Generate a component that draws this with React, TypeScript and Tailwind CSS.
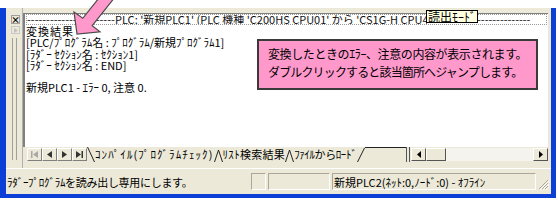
import React from "react";

const F = "font-['Noto_Sans_CJK_JP',sans-serif]";

function Slant({ d, w = 8 }: { d: string; w?: number }) {
  return (
    <svg width={w} height={15} viewBox={`0 0 ${w} 15`} className="shrink-0">
      <path d={d} stroke="#222" strokeWidth="1" fill="none" />
    </svg>
  );
}

function NavBtn({ children, dim }: { children: React.ReactNode; dim?: boolean }) {
  return (
    <div className={`w-[15px] h-[13px] flex items-center justify-center bg-[#ece9d8] border border-t-white border-l-white border-r-[#808080] border-b-[#808080] ${dim ? "text-[#a8a8a8]" : "text-[#333]"}`}>
      {children}
    </div>
  );
}

export default function App() {
  return (
    <div className={`w-[558px] h-[200px] bg-white pt-[8px] relative overflow-hidden ${F} text-black`}>
      <div className="w-[556px] h-[190px] flex flex-col bg-[#ece9d8] border-l-[6px] border-r-[5px] border-b-[4px] border-l-[#0b3fd6] border-r-[#0b3fd6] border-b-[#0b3fd6]">
        {/* main area */}
        <div className="flex h-[160px]">
          {/* left dock strip */}
          <div className="w-[16px] flex flex-col items-start pl-[5px] pt-[7px]">
            <div className="w-[9px] h-[9px] bg-[#ece9d8] border border-[#a0a0a0] flex items-center justify-center text-[9px] leading-none font-bold">
              ×
            </div>
            <div className="w-[9px] h-[8px] mt-[2px] bg-[#ece9d8] border border-[#c8c8c8] flex items-center justify-center">
              <svg width="4" height="5" viewBox="0 0 4 5"><path d="M0 0 L4 2.5 L0 5Z" fill="#c0c0c0" /></svg>
            </div>
            <div className="flex gap-[3px] mt-[4px] h-[122px] ml-[1px]">
              <div className="w-[1px] h-full bg-[#a0a0a0]" />
              <div className="w-[1px] h-full bg-[#a0a0a0]" />
            </div>
          </div>
          {/* pane */}
          <div className="flex-1 flex flex-col pt-[5px] pr-[3px] border-l border-l-[#b0b0b0]">
            <div className="relative h-[134px] bg-white border-l-2 border-t border-l-[#808080] border-t-[#808080] pl-[1px]">
              {/* header line */}
              <div className="h-[11px] mr-[1px] border border-dotted border-[#9a9a9a] flex items-center text-[11px] leading-[11px] whitespace-nowrap overflow-hidden text-[#111]">
                <span className="w-[88px] overflow-hidden shrink-0">------------------------</span>
                <span className="w-[312px] overflow-hidden shrink-0">PLC: '新規PLC1' (PLC 機種 'C200HS CPU01' から 'CS1G-H CPU42' へ変更)</span>
                <span className="w-[50px] shrink-0" />
                <span className="w-[53px] overflow-hidden shrink-0">------------------</span>
              </div>
              {/* tooltip */}
              <div className="absolute left-[401px] top-[-4px] h-[13px] px-[1px] bg-[#ffffe1] border border-black text-[12px] leading-[11px] whitespace-nowrap">
                読出ﾓｰﾄﾞ
              </div>
              {/* text lines */}
              <div className="pt-[1px] text-[11px] leading-[11.3px] whitespace-pre">
                <div className="tracking-[1px]">変換結果</div>
                <div>[PLC/ﾌﾟﾛｸﾞﾗﾑ名 : ﾌﾟﾛｸﾞﾗﾑ/新規ﾌﾟﾛｸﾞﾗﾑ1]</div>
                <div>[ﾗﾀﾞｰ ｾｸｼｮﾝ名 : ｾｸｼｮﾝ1]</div>
                <div>[ﾗﾀﾞｰ ｾｸｼｮﾝ名 : END]</div>
                <div> </div>
                <div>新規PLC1 - ｴﾗｰ 0, 注意 0.</div>
              </div>
              {/* callout */}
              <div className="absolute left-[232px] top-[25px] w-[281px] h-[51px] bg-[#ff99cc] border-2 border-[#3a3a3a] pl-[9px] pt-[4px] text-[12px] leading-[18px] whitespace-nowrap">
                <div className="tracking-[-0.4px]">変換したときのｴﾗｰ、注意の内容が表示されます。</div>
                <div className="tracking-[-0.85px]">ダブルクリックすると該当箇所へジャンプします。</div>
              </div>
            </div>
            {/* tab bar */}
            <div className="h-[15px] flex items-center text-[11px] leading-[13px] whitespace-nowrap">
              <div className="flex pl-[4px] shrink-0">
                <NavBtn dim>
                  <svg width="7" height="7" viewBox="0 0 7 7"><path d="M0 0h1.5v7H0z M7 0 L2 3.5 L7 7Z" fill="currentColor" /></svg>
                </NavBtn>
                <NavBtn>
                  <svg width="5" height="7" viewBox="0 0 5 7"><path d="M5 0 L0 3.5 L5 7Z" fill="currentColor" /></svg>
                </NavBtn>
                <NavBtn>
                  <svg width="5" height="7" viewBox="0 0 5 7"><path d="M0 0 L5 3.5 L0 7Z" fill="currentColor" /></svg>
                </NavBtn>
                <NavBtn>
                  <svg width="7" height="7" viewBox="0 0 7 7"><path d="M0 0 L5 3.5 L0 7Z M5.5 0h1.5v7H5.5z" fill="currentColor" /></svg>
                </NavBtn>
              </div>
              <Slant d="M0.5 0 L7.5 15" />
              <span className="tracking-[1.1px]">ｺﾝﾊﾟｲﾙ(ﾌﾟﾛｸﾞﾗﾑﾁｪｯｸ)</span>
              <Slant w={9} d="M0.5 15 L4.5 3 M4.5 3 L8.5 15" />
              <span className="tracking-[0.3px]">ﾘｽﾄ検索結果</span>
              <Slant w={9} d="M0.5 15 L4.5 3 M4.5 3 L8.5 15" />
              <span className="tracking-[-0.4px]">ﾌｧｲﾙからﾛｰﾄﾞ</span>
              <Slant d="M0.5 15 L7.5 1" />
              <div className="flex-1 h-[15px] border-t border-t-[#222]" />
              <div className="h-[15px] w-[5px] flex gap-[2px] shrink-0">
                <div className="w-[1px] h-full bg-[#555]" />
                <div className="w-[1px] h-full bg-[#555]" />
              </div>
              <div className="w-[137px] shrink-0 h-[13px] flex bg-[#f4f3ee]">
                <div className="w-[15px] h-[13px] flex items-center justify-center bg-[#ece9d8] border border-t-white border-l-white border-r-[#555] border-b-[#555]">
                  <svg width="4" height="7" viewBox="0 0 4 7"><path d="M4 0 L0 3.5 L4 7Z" fill="#000" /></svg>
                </div>
                <div className="w-[20px] h-[13px] bg-[#ece9d8] border border-t-white border-l-white border-r-[#555] border-b-[#555]" />
                <div className="flex-1" />
                <div className="w-[15px] h-[13px] flex items-center justify-center bg-[#ece9d8] border border-t-white border-l-white border-r-[#555] border-b-[#555]">
                  <svg width="4" height="7" viewBox="0 0 4 7"><path d="M0 0 L4 3.5 L0 7Z" fill="#000" /></svg>
                </div>
              </div>
            </div>
          </div>
        </div>
        {/* status bar */}
        <div className="flex-1 flex items-center border-t border-t-white pl-[1px] pr-[2px] text-[11px] leading-[14px] whitespace-nowrap">
          <div className="w-[244px] shrink-0 tracking-[-0.3px]">ﾗﾀﾞｰﾌﾟﾛｸﾞﾗﾑを読み出し専用にします。</div>
          <div className="w-[15px] h-[17px] border border-t-[#aca899] border-l-[#aca899] border-r-white border-b-white shrink-0" />
          <div className="w-[62px] ml-[2px] h-[17px] border border-t-[#aca899] border-l-[#aca899] border-r-white border-b-white shrink-0" />
          <div className="w-[204px] ml-[2px] h-[17px] border border-t-[#aca899] border-l-[#aca899] border-r-white border-b-white shrink-0 pl-[1px] flex items-center">
            新規PLC2(ﾈｯﾄ:0,ﾉｰﾄﾞ:0) - ｵﾌﾗｲﾝ
          </div>
          <div className="flex-1 h-[17px] flex items-end justify-end">
            <svg width="11" height="11" viewBox="0 0 11 11">
              <path d="M10 1 L1 10 M10 4 L4 10 M10 7 L7 10" stroke="#aca899" strokeWidth="1" />
              <path d="M11 2 L2 11 M11 5 L5 11 M11 8 L8 11" stroke="#fff" strokeWidth="1" />
            </svg>
          </div>
        </div>
      </div>
      {/* pink arrow annotation */}
      <svg className="absolute left-0 top-0 pointer-events-none" width="140" height="50" viewBox="0 0 140 50">
        <path
          d="M77 34 L74 12.1 L82.8 18.3 L104.3 -8.7 L113.7 -1.3 L92.2 25.7 L100 31.9 Z"
          fill="#ff99cc"
          stroke="#4a4a4a"
          strokeWidth="1.2"
          strokeLinejoin="miter"
        />
      </svg>
    </div>
  );
}
